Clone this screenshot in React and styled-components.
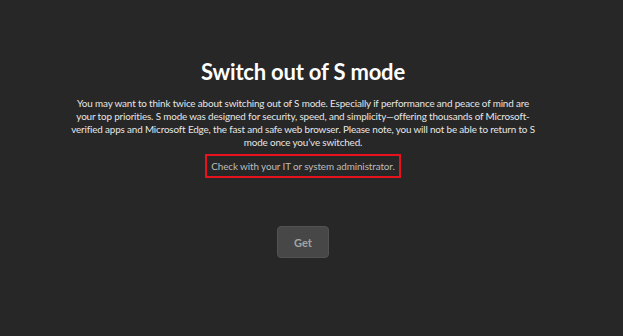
import styled, { createGlobalStyle } from "styled-components";

const GlobalStyle = createGlobalStyle`
  html, body {
    margin: 0;
    padding: 0;
    background-color: #272727;
  }
`;

export default function App() {
  return (
    <>
      <GlobalStyle />
      <Page>
        <Content>
          <Title>Switch out of S mode</Title>
          <Body>
            You may want to think twice about switching out of S mode. Especially if performance and peace of mind are
            your top priorities. S mode was designed for security, speed, and simplicity—offering thousands of Microsoft-verified
            apps and Microsoft Edge, the fast and safe web browser. Please note, you will not be able to return to S
            mode once you’ve switched.
          </Body>
          <Highlight>Check with your IT or system administrator.</Highlight>
          <GetButton disabled>Get</GetButton>
        </Content>
      </Page>
    </>
  );
}

const Page = styled.div`
  width: 623px;
  height: 336px;
  box-sizing: border-box;
  background-color: #272727;
  font-family: "Lato", "Open Sans", sans-serif;
  padding: 58px 17px 0 0;
  display: flex;
  justify-content: center;
  overflow: hidden;
`;

const Content = styled.div`
  display: flex;
  flex-direction: column;
  align-items: center;
`;

const Title = styled.h1`
  margin: 0;
  font-size: 22px;
  line-height: 28px;
  font-weight: 700;
  letter-spacing: -0.2px;
  color: #ffffff;
`;

const Body = styled.p`
  margin: 11px 0 0;
  width: 466px;
  font-size: 9.9px;
  line-height: 13px;
  letter-spacing: -0.15px;
  text-align: center;
  color: #e6e6e6;
`;

const Highlight = styled.div`
  margin-top: 5px;
  width: 196px;
  height: 24px;
  box-sizing: border-box;
  border: 2px solid #e8121f;
  display: flex;
  align-items: center;
  justify-content: center;
  font-size: 9.9px;
  letter-spacing: -0.1px;
  color: #bdbdbd;
`;

const GetButton = styled.button`
  margin-top: 48px;
  width: 52px;
  height: 32px;
  border-radius: 4px;
  border: 1px solid #525252;
  background-color: #474747;
  color: #a3a3a3;
  font-family: "Lato", sans-serif;
  font-size: 11px;
  font-weight: 700;
`;
